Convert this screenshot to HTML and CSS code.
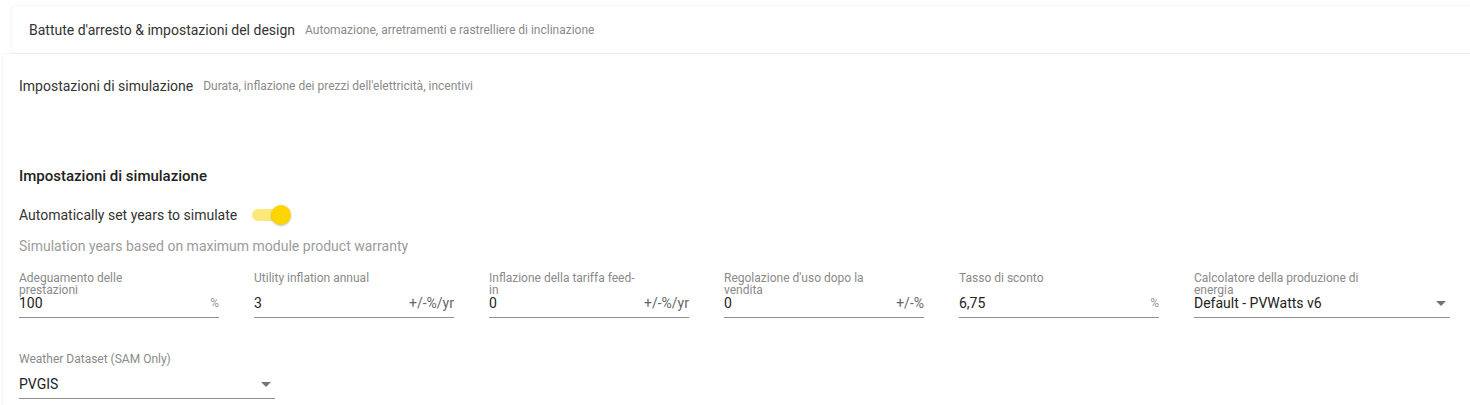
FILE: index.html
```html
<!DOCTYPE html>
<html lang="it">
<head>
  <meta charset="UTF-8" />
  <title>Impostazioni di simulazione</title>
  <link rel="stylesheet" href="styles.css">
</head>
<body>
  <div class="accordion">
    <div class="panel panel-collapsed">
      <div class="panel-header">
        <span class="panel-title">Battute d'arresto &amp; impostazioni del design</span>
        <span class="panel-desc">Automazione, arretramenti e rastrelliere di inclinazione</span>
      </div>
    </div>

    <div class="panel panel-expanded">
      <div class="panel-header tall">
        <span class="panel-title">Impostazioni di simulazione</span>
        <span class="panel-desc">Durata, inflazione dei prezzi dell'elettricità, incentivi</span>
      </div>

      <div class="panel-body">
        <h4 class="section-title">Impostazioni di simulazione</h4>

        <div class="toggle-row">
          <span>Automatically set years to simulate</span>
          <span class="toggle on"><span class="thumb"></span></span>
        </div>
        <div class="hint">Simulation years based on maximum module product warranty</div>

        <div class="fields">
          <div class="field">
            <label>Adeguamento delle prestazioni</label>
            <div class="control"><span class="value">100</span><span class="suffix light">%</span></div>
          </div>
          <div class="field">
            <label>Utility inflation annual</label>
            <div class="control"><span class="value">3</span><span class="suffix">+/-%/yr</span></div>
          </div>
          <div class="field">
            <label>Inflazione della tariffa feed-in</label>
            <div class="control"><span class="value">0</span><span class="suffix">+/-%/yr</span></div>
          </div>
          <div class="field">
            <label>Regolazione d'uso dopo la vendita</label>
            <div class="control"><span class="value">0</span><span class="suffix">+/-%</span></div>
          </div>
          <div class="field">
            <label>Tasso di sconto</label>
            <div class="control"><span class="value">6,75</span><span class="suffix light">%</span></div>
          </div>
          <div class="field select">
            <label>Calcolatore della produzione di energia</label>
            <div class="control"><span class="value">Default - PVWatts v6</span><span class="arrow"></span></div>
          </div>
        </div>

        <div class="fields">
          <div class="field select">
            <label>Weather Dataset (SAM Only)</label>
            <div class="control"><span class="value">PVGIS</span><span class="arrow"></span></div>
          </div>
        </div>
      </div>
    </div>
  </div>
</body>
</html>
```

FILE: styles.css
```css
body {
  margin: 0;
  background: #fff;
  font-family: Roboto, "Liberation Sans", sans-serif;
  color: #212121;
  overflow: hidden;
}
.accordion {
  padding-top: 6px;
}
.panel {
  background: #fff;
  box-shadow: 0 0 2px rgba(0,0,0,0.12);
}
.panel-collapsed {
  margin-left: 12px;
  margin-right: -20px;
  border-radius: 4px 0 0 4px;
}
.panel-expanded {
  margin-left: 3px;
  margin-right: -20px;
  margin-top: 1px;
}
.panel-header {
  display: flex;
  align-items: center;
  height: 47px;
  padding: 0 17px;
}
.panel-header.tall {
  height: 64px;
  padding: 0 16px;
}
.panel-title {
  font-size: 14px;
  color: #333;
  margin-right: 10px;
}
.panel-desc {
  font-size: 12px;
  color: #8a8a8a;
}
.panel-body {
  padding: 48px 16px 8px;
}
.section-title {
  margin: 0;
  font-size: 15px;
  font-weight: 500;
  line-height: 20px;
  color: #222;
}
.toggle-row {
  display: flex;
  align-items: center;
  margin-top: 19px;
  height: 20px;
  font-size: 14px;
  color: #333;
}
.toggle {
  position: relative;
  display: inline-block;
  width: 34px;
  height: 12px;
  margin-left: 15px;
  border-radius: 7px;
  background: #fde97a;
}
.toggle .thumb {
  position: absolute;
  top: -4px;
  right: -5px;
  width: 20px;
  height: 20px;
  border-radius: 50%;
  background: #ffd500;
  box-shadow: 0 1px 2px rgba(0,0,0,0.25);
}
.hint {
  margin-top: 11px;
  font-size: 14px;
  line-height: 20px;
  color: #9b9b9b;
}
.fields {
  display: flex;
  gap: 35px;
  margin-top: 16px;
}
.fields + .fields {
  margin-top: 35px;
}
.field {
  width: 200px;
  display: flex;
  flex-direction: column;
}
.field.select {
  width: 256px;
}
.field label {
  display: block;
  width: 75%;
  height: 22px;
  font-size: 12px;
  line-height: 12px;
  color: #8a8a8a;
}
.control {
  display: flex;
  align-items: center;
  justify-content: space-between;
  height: 18px;
  padding-bottom: 5px;
  border-bottom: 1px solid #8f8f8f;
}
.field .value {
  font-size: 14px;
  color: #222;
  line-height: 18px;
}
.suffix {
  font-size: 14px;
  color: #666;
  line-height: 18px;
}
.suffix.light {
  font-size: 12px;
  color: #999;
}
.arrow {
  width: 0;
  height: 0;
  margin-right: 4px;
  border-left: 5px solid transparent;
  border-right: 5px solid transparent;
  border-top: 5px solid #757575;
}
```
